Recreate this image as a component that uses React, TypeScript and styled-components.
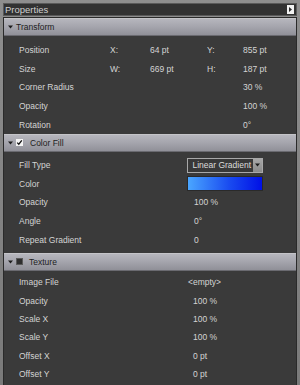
import styled, { createGlobalStyle } from 'styled-components';

const GlobalStyle = createGlobalStyle`
  html, body {
    margin: 0;
    padding: 0;
    background: #7d7d7d;
  }
  * {
    box-sizing: border-box;
  }
`;

type Pair = { label: string; a: [string, string]; b: [string, string] };

const transformPairs: Pair[] = [
  { label: 'Position', a: ['X:', '64 pt'], b: ['Y:', '855 pt'] },
  { label: 'Size', a: ['W:', '669 pt'], b: ['H:', '187 pt'] },
];

const transformSingles = [
  { label: 'Corner Radius', value: '30 %' },
  { label: 'Opacity', value: '100 %' },
  { label: 'Rotation', value: '0°' },
];

const colorRows = [
  { label: 'Opacity', value: '100 %' },
  { label: 'Angle', value: '0°' },
  { label: 'Repeat Gradient', value: '0' },
];

const textureRows = [
  { label: 'Opacity', value: '100 %' },
  { label: 'Scale X', value: '100 %' },
  { label: 'Scale Y', value: '100 %' },
  { label: 'Offset X', value: '0 pt' },
  { label: 'Offset Y', value: '0 pt' },
];

const Arrow = () => (
  <svg width="5" height="4" viewBox="0 0 5 4">
    <path d="M0 0.5 L5 0.5 L2.5 3.5 Z" fill="#1c1c1c" />
  </svg>
);

const App = () => {
  return (
    <Window>
      <GlobalStyle />
      <TitleBar>
        <Title>Properties</Title>
        <MenuButton>
          <svg width="7" height="9" viewBox="0 0 7 9">
            <rect x="0" y="0" width="7" height="9" fill="#f2f2f2" />
            <path d="M2 2 L5 4.5 L2 7 Z" fill="#2a2a2a" />
          </svg>
        </MenuButton>
      </TitleBar>
      <Panel>
        <SectionHeader>
          <Arrow />
          <HeaderText $gap={3}>Transform</HeaderText>
        </SectionHeader>
        <SectionBody $top={5} $bottom={0}>
          {transformPairs.map((row) => (
            <Row key={row.label}>
              <Label $w={91}>{row.label}</Label>
              <Cell $w={40}>{row.a[0]}</Cell>
              <Cell $w={57}>{row.a[1]}</Cell>
              <Cell $w={36}>{row.b[0]}</Cell>
              <Cell>{row.b[1]}</Cell>
            </Row>
          ))}
          {transformSingles.map((row) => (
            <Row key={row.label}>
              <Label $w={224}>{row.label}</Label>
              <Cell>{row.value}</Cell>
            </Row>
          ))}
        </SectionBody>

        <SectionHeader>
          <Arrow />
          <Check $checked>
            <svg width="7" height="7" viewBox="0 0 7 7">
              <path d="M1.2 3.6 L2.8 5.2 L5.8 1.4" stroke="#111" strokeWidth="1.3" fill="none" />
            </svg>
          </Check>
          <HeaderText $gap={7}>Color Fill</HeaderText>
        </SectionHeader>
        <SectionBody $top={4} $bottom={4}>
          <Row>
            <Label $w={168}>Fill Type</Label>
            <Select>
              <SelectText>Linear Gradient</SelectText>
              <SelectButton>
                <Arrow />
              </SelectButton>
            </Select>
          </Row>
          <Row>
            <Label $w={168}>Color</Label>
            <Swatch />
          </Row>
          {colorRows.map((row) => (
            <Row key={row.label}>
              <Label $w={175}>{row.label}</Label>
              <Cell>{row.value}</Cell>
            </Row>
          ))}
        </SectionBody>

        <SectionHeader>
          <Arrow />
          <Check />
          <HeaderText $gap={6}>Texture</HeaderText>
        </SectionHeader>
        <SectionBody $top={2} $bottom={0}>
          <Row>
            <Label $w={169}>Image File</Label>
            <Cell>&lt;empty&gt;</Cell>
          </Row>
          {textureRows.map((row) => (
            <Row key={row.label} $h={18.3}>
              <Label $w={174}>{row.label}</Label>
              <Cell>{row.value}</Cell>
            </Row>
          ))}
        </SectionBody>
      </Panel>
    </Window>
  );
};

export default App;

const Window = styled.div`
  display: flex;
  flex-direction: column;
  gap: 1px;
  width: 300px;
  height: 385px;
  padding: 3px 3px 0 3px;
  background: linear-gradient(#8e8e8e, #7a7a7a);
  font-family: Tahoma, 'Liberation Sans', 'DejaVu Sans', sans-serif;
  overflow: hidden;
`;

const TitleBar = styled.div`
  display: flex;
  align-items: center;
  justify-content: space-between;
  height: 13px;
  padding: 0 2px 0 1px;
  background: #323232;
  border: 1px solid #5a5a5a;
`;

const Title = styled.span`
  font-size: 9.5px;
  color: #cfcfcf;
  line-height: 11px;
`;

const MenuButton = styled.div`
  display: flex;
  width: 7px;
  height: 9px;
`;

const Panel = styled.div`
  flex: 1;
  display: flex;
  flex-direction: column;
  background: #3a3a3a;
  border: 1px solid #2a2a2a;
  border-bottom: none;
`;

const SectionHeader = styled.div`
  display: flex;
  align-items: center;
  height: 18px;
  padding-left: 4px;
  background: linear-gradient(#b6b6bd, #a6a6ae 45%, #909098);
  border-top: 1px solid #c4c4c8;
  border-bottom: 1px solid #6a6a70;
`;

const HeaderText = styled.span<{ $gap?: number }>`
  margin-left: ${(p) => p.$gap ?? 5}px;
  font-size: 8.5px;
  color: #1d1d1d;
`;

const Check = styled.div<{ $checked?: boolean }>`
  display: flex;
  width: 7px;
  height: 7px;
  margin-left: 3px;
  background: ${(p) => (p.$checked ? '#f4f4f4' : '#2e2e2e')};
  border: ${(p) => (p.$checked ? 'none' : '1px solid #5a5a5a')};
`;

const SectionBody = styled.div<{ $top: number; $bottom: number }>`
  display: flex;
  flex-direction: column;
  padding: ${(p) => p.$top}px 0 ${(p) => p.$bottom}px 0;
`;

const Row = styled.div<{ $h?: number }>`
  display: flex;
  align-items: center;
  height: ${(p) => p.$h ?? 18.6}px;
  padding-left: 15px;
  font-size: 8.5px;
  color: #d4d4d4;
`;

const Label = styled.span<{ $w: number }>`
  flex: none;
  width: ${(p) => p.$w}px;
`;

const Cell = styled.span<{ $w?: number }>`
  flex: none;
  width: ${(p) => (p.$w ? `${p.$w}px` : 'auto')};
`;

const Select = styled.div`
  display: flex;
  align-items: stretch;
  width: 76px;
  height: 15px;
  border: 1px solid #a8a8a8;
  background: #383838;
`;

const SelectText = styled.span`
  flex: 1;
  display: flex;
  align-items: center;
  justify-content: flex-end;
  padding-right: 2px;
  font-size: 8.5px;
  color: #dcdcdc;
`;

const SelectButton = styled.span`
  display: flex;
  align-items: center;
  justify-content: center;
  width: 9px;
  background: linear-gradient(#a8a8a8, #8a8a8a);
`;

const Swatch = styled.div`
  width: 76px;
  height: 15px;
  border: 1px solid #2a2a2a;
  background: linear-gradient(to right, #4aa6ff, #1a4cf0 55%, #0010e6);
`;
